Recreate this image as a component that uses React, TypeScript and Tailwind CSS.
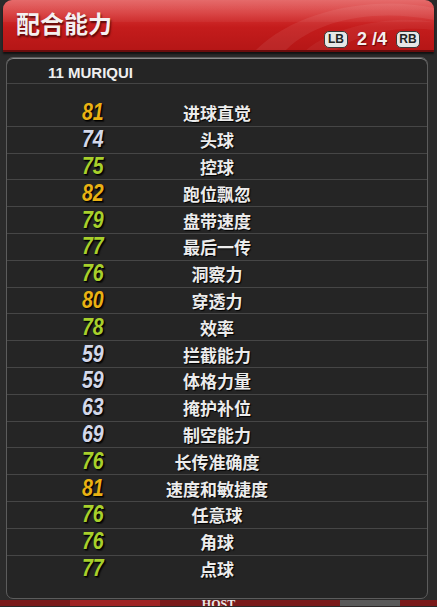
import React from "react";

const rows: [number, string][] = [
  [81, "进球直觉"],
  [74, "头球"],
  [75, "控球"],
  [82, "跑位飘忽"],
  [79, "盘带速度"],
  [77, "最后一传"],
  [76, "洞察力"],
  [80, "穿透力"],
  [78, "效率"],
  [59, "拦截能力"],
  [59, "体格力量"],
  [63, "掩护补位"],
  [69, "制空能力"],
  [76, "长传准确度"],
  [81, "速度和敏捷度"],
  [76, "任意球"],
  [76, "角球"],
  [77, "点球"],
];

function numColor(n: number) {
  if (n >= 80) return "text-[#eab214]";
  if (n >= 75) return "text-[#a8d02c]";
  return "text-[#d3d8ea]";
}

function Badge({ label }: { label: string }) {
  return (
    <span className="inline-flex h-[17px] w-[24px] items-center justify-center rounded-[5px] border border-[#3a3a3a] bg-[#e6e6e6] text-[12px] font-bold leading-none text-[#222] [font-family:'Liberation_Sans',sans-serif]">
      {label}
    </span>
  );
}

export default function App() {
  return (
    <div className="relative flex h-[607px] w-[437px] flex-col overflow-hidden bg-[#2b2b2b] [font-family:'Noto_Sans_CJK_SC','Liberation_Sans',sans-serif]">
      {/* header */}
      <div className="relative mx-[3px] h-[52px] overflow-hidden rounded-t-[9px] border-b-2 border-[#6a0c0c] bg-[linear-gradient(to_bottom,#e04a4a_0%,#d43030_30%,#c41c1c_55%,#b51616_100%)] shadow-[0_2px_2px_rgba(0,0,0,0.6)]">
        <div className="absolute inset-x-0 top-0 h-[22px] bg-[linear-gradient(to_bottom,rgba(255,255,255,0.18),rgba(255,255,255,0.04))]" />
        <svg className="absolute right-0 top-0" width="200" height="52" viewBox="0 0 200 52">
          <path d="M20 52 C 60 10, 140 -5, 200 8 L200 20 C 140 8, 80 20, 50 52 Z" fill="rgba(255,255,255,0.07)" />
          <path d="M70 52 C 100 25, 160 15, 200 22 L200 30 C 160 25, 120 35, 100 52 Z" fill="rgba(255,255,255,0.05)" />
        </svg>
        <div className="relative flex h-full items-start justify-between">
          <div className="pl-[13px] pt-[8px] text-[24px] font-bold leading-[30px] text-[#f4f0f0] [text-shadow:1px_2px_2px_rgba(60,0,0,0.8)]">
            配合能力
          </div>
          <div className="mr-[14px] mt-[30px] flex items-center gap-[9px]">
            <Badge label="LB" />
            <span className="text-[18px] font-bold leading-none text-[#f4eeee] [font-family:'Liberation_Sans',sans-serif] [text-shadow:1px_1px_1px_rgba(60,0,0,0.7)]">
              2 /4
            </span>
            <Badge label="RB" />
          </div>
        </div>
      </div>

      {/* panel */}
      <div className="ml-[6px] mt-[5px] h-[542px] w-[422px] rounded-[7px] border border-[#5c5c5c] bg-[#252525] shadow-[inset_0_1px_0_#8a8a8a]">
        <div className="flex h-[26px] items-center border-b border-[#454545] pl-[41px] pt-[6px] text-[15px] font-bold text-[#efefef] [font-family:'Liberation_Sans',sans-serif]">
          11 MURIQUI
        </div>
        <div className="pt-[16px]">
          {rows.map(([n, label], i) => (
            <div
              key={i}
              className={`flex h-[26.8px] items-center ${i < rows.length - 1 ? "border-b border-[#464646]" : ""}`}
            >
              <div
                className={`ml-[56px] w-[60px] text-center text-[23px] font-bold italic leading-none [font-family:'Liberation_Sans',sans-serif] [text-shadow:1px_1px_1px_#000,2px_2px_1px_rgba(0,0,0,0.5)] ${numColor(n)}`}
              >
                <span className="inline-block scale-x-[0.85]">{n}</span>
              </div>
              <div className="w-[188px] text-center text-[17px] font-bold leading-none text-[#ececec] [text-shadow:1px_1px_1px_#000]">
                {label}
              </div>
            </div>
          ))}
        </div>
      </div>

      {/* bottom background strip */}
      <div className="relative mt-[1px] flex h-[6px] items-start justify-center overflow-hidden bg-[#7a1a1a]">
        <div className="absolute left-[70px] top-0 h-[6px] w-[90px] bg-[#a02424]" />
        <div className="absolute left-[340px] top-0 h-[6px] w-[60px] bg-[#5a5a5a]" />
        <span className="relative mt-[-2px] text-[12px] font-bold leading-none text-[#e8e8e8] [font-family:'Liberation_Serif',serif]">HOST</span>
      </div>
    </div>
  );
}
